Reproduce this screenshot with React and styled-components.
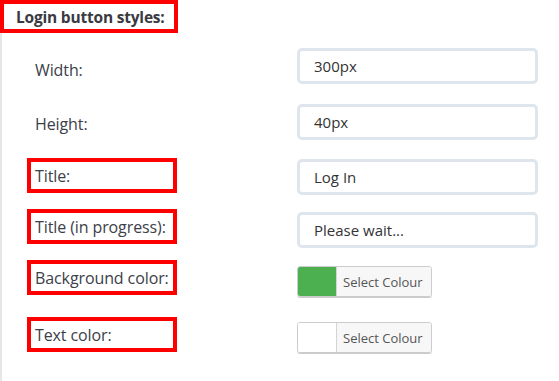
import React from 'react';
import styled, { createGlobalStyle } from 'styled-components';

const GlobalStyle = createGlobalStyle`
  html, body {
    margin: 0;
    padding: 0;
    background: #fff;
  }
  body {
    font-family: "Open Sans", "Noto Sans", sans-serif;
    color: #3c4049;
  }
`;

const Page = styled.div`
  width: 559px;
  height: 381px;
  overflow: hidden;
`;

const Heading = styled.div`
  box-sizing: border-box;
  width: 178px;
  height: 33px;
  border: 4px solid #ff0000;
  padding-left: 12px;
  display: flex;
  align-items: center;
  font-weight: 700;
  font-size: 15.5px;
  letter-spacing: -0.2px;
  color: #3a3a42;
  white-space: nowrap;
`;

const Body = styled.div`
  border-left: 2px solid #e6e6e6;
  padding-top: 15px;
  height: 348px;
  box-sizing: border-box;
`;

const Row = styled.div`
  display: flex;
  align-items: flex-start;
  height: ${(p) => p.$height}px;
`;

const Label = styled.div`
  box-sizing: border-box;
  width: 150px;
  height: 35px;
  margin-left: 25px;
  margin-top: ${(p) => p.$dy || 0}px;
  border: 4px solid ${(p) => (p.$marked ? '#ff0000' : 'transparent')};
  padding-left: 4px;
  display: flex;
  align-items: center;
  font-size: 16px;
  letter-spacing: -0.1px;
  white-space: nowrap;
`;

const Field = styled.div`
  margin-left: 120px;
  margin-top: ${(p) => p.$dy || 0}px;
`;

const TextInput = styled.div`
  box-sizing: border-box;
  width: 241px;
  height: 36px;
  border: 3px solid #dfe5ec;
  border-radius: 5px;
  padding-left: 14px;
  display: flex;
  align-items: center;
  font-size: 15px;
  color: #333;
`;

const Picker = styled.div`
  box-sizing: border-box;
  display: flex;
  width: 135px;
  height: 31px;
  border: 1px solid #cccccc;
  border-radius: 3px;
  box-shadow: 0 1px 0 #cccccc;
  overflow: hidden;
`;

const Swatch = styled.div`
  width: 38px;
  background: ${(p) => p.$color};
  border-right: 1px solid #d4d4d4;
`;

const PickerText = styled.div`
  flex: 1;
  background: #f7f7f7;
  display: flex;
  align-items: center;
  padding-left: 6px;
  font-size: 13px;
  color: #555;
  white-space: nowrap;
`;

const rows = [
  { label: 'Width:', value: '300px', height: 56, labelDy: 4 },
  { label: 'Height:', value: '40px', height: 54, labelDy: 2 },
  { label: 'Title:', value: 'Log In', height: 51, marked: true, fieldDy: 1 },
  { label: 'Title (in progress):', value: 'Please wait...', height: 51, marked: true, fieldDy: 3 },
  { label: 'Background color:', color: '#4caf50', height: 57, marked: true, fieldDy: 6 },
  { label: 'Text color:', color: '#ffffff', height: 50, marked: true, fieldDy: 5 },
];

export default function App() {
  return (
    <Page>
      <GlobalStyle />
      <Heading>Login button styles:</Heading>
      <Body>
        {rows.map((r) => (
          <Row key={r.label} $height={r.height}>
            <Label $marked={r.marked} $dy={r.labelDy}>{r.label}</Label>
            <Field $dy={r.fieldDy}>
              {r.color ? (
                <Picker>
                  <Swatch $color={r.color} />
                  <PickerText>Select Colour</PickerText>
                </Picker>
              ) : (
                <TextInput>{r.value}</TextInput>
              )}
            </Field>
          </Row>
        ))}
      </Body>
    </Page>
  );
}
